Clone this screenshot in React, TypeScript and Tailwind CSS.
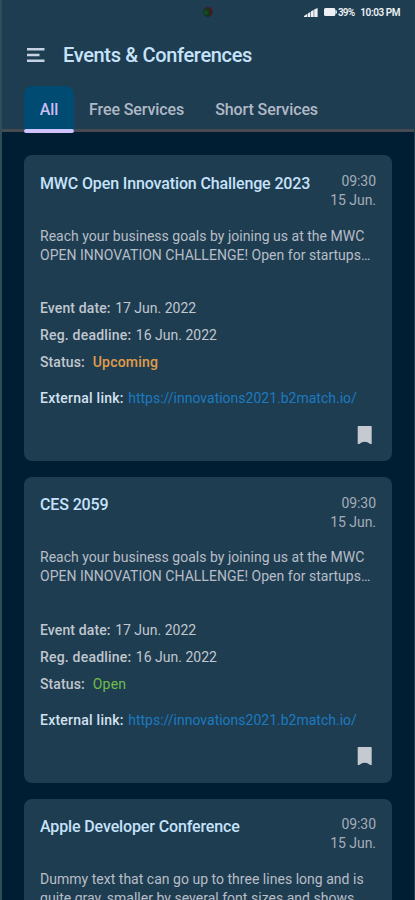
import clsx from 'clsx';

type EventItem = {
  title: string;
  time: string;
  date: string;
  lines: string[];
  eventDate: string;
  deadline: string;
  status: 'Upcoming' | 'Open';
  link: string;
};

const mwcLines = [
  'Reach your business goals by joining us at the MWC',
  'OPEN INNOVATION CHALLENGE! Open for startups…',
];

const base = {
  time: '09:30',
  date: '15 Jun.',
  eventDate: '17 Jun. 2022',
  deadline: '16 Jun. 2022',
  link: 'https://innovations2021.b2match.io/',
};

const events: EventItem[] = [
  { ...base, title: 'MWC Open Innovation Challenge 2023', lines: mwcLines, status: 'Upcoming' },
  { ...base, title: 'CES 2059', lines: mwcLines, status: 'Open' },
  {
    ...base,
    title: 'Apple Developer Conference',
    lines: ['Dummy text that can go up to three lines long and is', 'quite gray, smaller by several font sizes and shows'],
    status: 'Open',
  },
];

const tabs = ['All', 'Free Services', 'Short Services'];

function StatusBar() {
  return (
    <div className="relative flex h-6 items-center justify-end pr-[14px] text-[10px] font-semibold text-[#eef1f4]">
      <span className="absolute left-[201px] top-[7px] h-[10px] w-[10px] rounded-full bg-[radial-gradient(circle_at_30%_55%,#0c5a2a_0%,#17301c_40%,#4f1820_68%,#15303f_100%)]" />
      <svg width="14" height="9" viewBox="0 0 14 9" className="mr-[6px]" fill="currentColor">
        <path d="M0 9V8l3-2v3zM3.6 9V5.7l2.7-1.8V9zM6.9 9V3.6l2.8-1.9V9zM10.2 9V1.5L13.6 0v9z" />
      </svg>
      <svg width="13" height="8" viewBox="0 0 13 8" className="mr-px" fill="currentColor">
        <rect width="11.4" height="8" rx="1.5" />
        <rect x="11.4" y="2.5" width="1.5" height="3" />
      </svg>
      <span className="mr-[6px] tracking-[-0.8px]">39%</span>
      <span className="tracking-[-0.45px]">10:03 PM</span>
    </div>
  );
}

function EventCard({ event }: { event: EventItem }) {
  return (
    <article className="h-[305.6px] shrink-0 rounded-[8px] bg-[#1f3d51] px-4 pt-[17.2px]">
      <div className="flex justify-between">
        <h2 className="whitespace-nowrap text-[16px] font-medium leading-[22px] tracking-[-0.13px] text-[#c6e3fb]">
          {event.title}
        </h2>
        <div className="-mt-[0.6px] text-right text-[14px] leading-[19px] tracking-[-0.05px] text-[#a3adb8]">
          <div>{event.time}</div>
          <div>{event.date}</div>
        </div>
      </div>
      <div className="mt-[16.6px] whitespace-nowrap text-[14px] leading-[19px] tracking-[0.02px] text-[#b7bec7]">
        {event.lines.map((line) => (
          <p key={line}>{line}</p>
        ))}
      </div>
      <div className="mt-[30.8px] text-[14px] leading-[27px] text-[#c0c7cf]">
        <p>
          <span className="mr-px font-medium tracking-[0.12px]">Event date:</span> {event.eventDate}
        </p>
        <p>
          <span className="mr-px font-medium tracking-[0.2px]">Reg. deadline:</span> {event.deadline}
        </p>
        <p className="flex gap-2">
          <span className="font-medium tracking-[0.1px]">Status:</span>
          <span
            className={clsx(
              'tracking-[0.2px]',
              event.status === 'Upcoming' ? 'font-medium text-[#e09c4b]' : 'text-[#71bd49]',
            )}
          >
            {event.status}
          </span>
        </p>
      </div>
      <p className="mt-3 whitespace-nowrap text-[14px] leading-5 text-[#1b7ac0]">
        <span className="mr-px font-medium tracking-[0.24px] text-[#d3e2f0]">External link:</span> <a>{event.link}</a>
      </p>
      <div className="mt-[16.5px] flex justify-end">
        <svg width="19" height="20" viewBox="0 0 19 20" fill="#c5c9d0">
          <path d="M.7 1.6Q.7 1 1.3 1h12.8q.6 0 .6.6V19h-1.5Q7.7 14.600 2.200 19H.7z" />
        </svg>
      </div>
    </article>
  );
}

export default function App() {
  return (
    <div className="flex h-[900px] w-[415px] flex-col overflow-hidden border-l-2 border-r border-l-[#304c59] border-r-[#213f50] bg-[#001e33] font-[Roboto,sans-serif]">
      <header className="h-[132px] shrink-0 border-b-[3px] border-[#474b51] bg-[#1f3d51]">
        <StatusBar />
        <div className="flex h-[62px] items-center pl-[25px]">
          <svg width="18" height="14" viewBox="0 0 18 14" fill="#c6d3e4">
            <path d="M0 0h17.5v2.6H0zM0 5.700h12.500v2.600H0zM0 11.400h17.500V14H0z" />
          </svg>
          <h1 className="ml-[18px] text-[20px] font-medium leading-6 tracking-[-0.33px] text-[#c6e3fb]">
            Events &amp; Conferences
          </h1>
        </div>
        <nav className="flex h-[46px] pl-[22px] text-[16px] font-medium leading-[47px] tracking-[-0.1px]">
          {tabs.map((tab, i) => (
            <div
              key={tab}
              className={clsx(
                'whitespace-nowrap',
                i === 0 &&
                  'relative w-[50px] rounded-t-[8px] bg-[#004b71] text-center text-[#cabef5] after:absolute after:left-0 after:top-[43px] after:h-1 after:w-full after:rounded-full after:bg-[#cfc3fb]',
                i === 1 && 'ml-[15px] text-[#b0b9c6]',
                i === 2 && 'ml-[31px] text-[#b0b9c6]',
              )}
            >
              {tab}
            </div>
          ))}
        </nav>
      </header>
      <main className="flex flex-col gap-4 pl-[22px] pr-[22px] pt-[23.4px]">
        {events.map((event) => (
          <EventCard key={event.title} event={event} />
        ))}
      </main>
    </div>
  );
}
